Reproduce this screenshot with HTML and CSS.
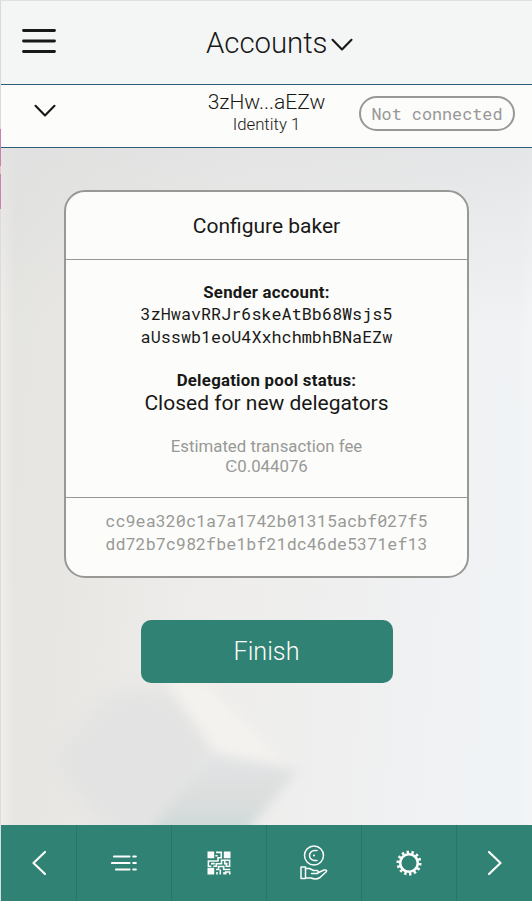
FILE: index.html
```html
<!DOCTYPE html>
<html lang="en">
<head>
<meta charset="utf-8">
<title>Accounts</title>
<link rel="stylesheet" href="styles.css">
</head>
<body>
<div class="window">
  <aside class="gutter"></aside>
  <div class="app">
    <header class="topbar">
      <svg class="menu" width="34" height="26" viewBox="0 0 34 26"><path d="M1.500 2.500h31M1.500 13h31M1.500 23.500h31"/></svg>
      <h1 class="title">Accounts</h1>
      <svg class="chevron" width="22" height="14" viewBox="0 0 22 14"><path d="M1.500 1.800l9.500 9.700 9.500-9.700"/></svg>
    </header>
    <section class="account">
      <svg class="chevron" width="22" height="14" viewBox="0 0 22 14"><path d="M1.500 1.800l9.500 9.700 9.500-9.700"/></svg>
      <div class="account-name">
        <div class="address">3zHw...aEZw</div>
        <div class="identity">Identity 1</div>
      </div>
      <div class="status">Not connected</div>
    </section>
    <main class="content">
      <svg class="backdrop" width="531" height="677" viewBox="0 0 531 677" preserveAspectRatio="none">
        <defs>
          <filter id="soft" x="-30%" y="-30%" width="160%" height="160%"><feGaussianBlur stdDeviation="11"/></filter>
          <filter id="fine" x="-30%" y="-30%" width="160%" height="160%"><feGaussianBlur stdDeviation="6"/></filter>
          <linearGradient id="face" x1="0" y1="0" x2="0" y2="1"><stop offset="0" stop-color="#e2e4e5"/><stop offset=".6" stop-color="#dbdddd"/><stop offset="1" stop-color="#c6d8d6"/></linearGradient>
        </defs>
        <path filter="url(#soft)" fill="#e2e3e2" d="M48 610L110 545 165 540 215 595 180 690H110z"/>
        <path filter="url(#fine)" fill="#f4f2ee" d="M165 530L205 535 290 622 215 604z"/>
        <path filter="url(#fine)" fill="url(#face)" d="M208 606L298 622 240 690H146z"/>
      </svg>
      <article class="card">
        <h2 class="card-title">Configure baker</h2>
        <div class="details">
          <div class="label">Sender account:</div>
          <div class="mono sender">3zHwavRRJr6skeAtBb68Wsjs5<br>aUsswb1eoU4XxhchmbhBNaEZw</div>
          <div class="label second">Delegation pool status:</div>
          <div class="value">Closed for new delegators</div>
          <div class="fee">Estimated transaction fee<br>Ͼ0.044076</div>
        </div>
        <div class="hash mono">cc9ea320c1a7a1742b01315acbf027f5<br>dd72b7c982fbe1bf21dc46de5371ef13</div>
      </article>
      <button class="finish">Finish</button>
    </main>
    <nav class="tabs">
      <a class="tab"><svg width="16" height="26" viewBox="0 0 16 26"><path d="M14 2L2.500 13 14 24"/></svg></a>
      <a class="tab"><svg width="26" height="18" viewBox="0 0 26 18"><path d="M3 2.500h15.500M22.300 2.500h2.500M1 9h17.500M22.300 9h2.500M5 15.500h13.500M22.300 15.500h2.500"/></svg></a>
      <a class="tab"><svg class="solid" width="24" height="24" viewBox="0 0 24 24"><path d="M.5.500h6.700v6.700H.5zM16.800.500h6.700v6.700h-6.700zM.5 16.800h6.700v6.700H.5z"/><path class="maze" d="M8.300 4.800h2.400M9 1.400h5.300v5.300h-3.300v3.300H1.400v5.200h3M4 12.600h3.800M9.300 12v3.300h-3M9.300 12.700h5.200V9.300h3.200v3.300h2.800M14.500 9.300h8.100v5.900h-3.300v-2.600M9 18.500h2.500v-3h5.200v3h6.500M10 21v2.500M13.300 23.500v-5M17 23.500v-2.400M18.700 23.500v-2.500h4v2.500"/></svg></a>
      <a class="tab"><svg class="thin" width="28" height="36" viewBox="0 0 28 36"><circle cx="14" cy="10.500" r="9.500"/><path d="M17 5.500h-2.500a5 5 0 0 0 0 10H17"/><circle class="dot" cx="14" cy="10.500" r="1"/><path d="M1 22h4.500v11.500H1zM5.500 23.500h4l4 2h3.500q2.500 1 .5 3h-6M17.500 28l6.500-3q3-.3 2.500 1.500l-6.500 6q-4 2.500-9 .5H5.500"/></svg></a>
      <a class="tab"><svg width="26" height="26" viewBox="0 0 26 26"><circle class="ring" cx="13" cy="13" r="8.800"/><circle class="teeth" cx="13" cy="13" r="10.900" pathLength="28"/></svg></a>
      <a class="tab"><svg width="16" height="26" viewBox="0 0 16 26"><path d="M2 2l11.500 11L2 24"/></svg></a>
    </nav>
  </div>
</div>
</body>
</html>
```
FILE: styles.css
```css
* { box-sizing: border-box; }
body { margin: 0; font-family: Roboto, "Liberation Sans", sans-serif; color: #181817; }
h1, h2 { margin: 0; }
svg { display: block; fill: none; stroke: currentColor; stroke-linecap: round; stroke-linejoin: round; }
.window { display: flex; height: 901px; border-top: 1px solid #dfe1e1; overflow: hidden; }
.gutter { width: 1px; background: linear-gradient(#d9dadb 0 128px, #ce80ac 128px 165px, #e4c5ce 165px 173px, #ce80ac 173px 208px, #dcdce0 208px); }
.app { width: 531px; display: flex; flex-direction: column; }
.topbar { height: 84px; display: grid; grid-template-columns: 205px auto 22px 1fr; align-items: center; background: #f4f6f5; border-bottom: 1px solid #2f5d78; }
.menu { margin: -3px 0 0 20.500px; stroke-width: 2.800; }
.title { font-size: 29.400px; font-weight: 300; line-height: 36px; width: 125px; white-space: nowrap; letter-spacing: -.05px; }
.chevron { stroke-width: 2.100; }
.topbar .chevron { margin-top: 4px; }
.account { height: 63px; display: grid; grid-template-columns: 173px 185px 156px; background: #fcfcfa; border-bottom: 1px solid #2f5d78; }
.account .chevron { margin: 19px 0 0 33px; }
.account-name { text-align: center; font-weight: 300; padding-top: 5px; }
.address { font-size: 21px; line-height: 24px; }
.identity { font-size: 16.800px; line-height: 20px; }
.status { margin-top: 11px; height: 35px; border: 2px solid #989898; border-radius: 18px; color: #989898; text-align: center; font: 16.800px/31px "Roboto Mono", "Liberation Mono", monospace; }
.content { position: relative; flex: 1; display: flex; flex-direction: column; align-items: center; padding-top: 42px; background: linear-gradient(90deg, #f0edea, rgba(240,237,234,0) 14px 516px, rgba(244,245,247,.9)), linear-gradient(95deg, #e4e4e0 3%, #e9e7e4 18%, #eeedeb 42%, #efefef 65%, #f0f2f4 85%, #eff3f5); }
.content::before { content: ""; position: absolute; inset: 0; background: linear-gradient(rgba(222,223,224,.65), rgba(226,227,228,0) 180px); }
.backdrop { position: absolute; inset: 0; stroke: none; }
.card { position: relative; width: 405px; height: 388px; border: 2px solid #989996; border-radius: 21px; background: #fcfcfa; text-align: center; overflow: hidden; }
.card-title { height: 68px; border-bottom: 1px solid #989996; font-size: 21px; font-weight: 400; line-height: 69px; }
.details { height: 238px; padding-top: 22px; border-bottom: 1px solid #989996; }
.label { font-size: 16.800px; line-height: 21px; font-weight: 700; letter-spacing: .25px; }
.mono { font: 16.800px/23px "Roboto Mono", "Liberation Mono", monospace; }
.sender { margin-top: -1px; }
.second { margin-top: 22px; }
.value { font-size: 21px; line-height: 25px; }
.fee { margin-top: 20px; font-size: 16.800px; line-height: 20px; color: #989996; }
.hash { padding-top: 11px; color: #989996; }
.finish { position: relative; margin-top: 42px; width: 252px; height: 63px; border: 0; border-radius: 10px; background: #308274; color: #fcfcfa; font: 300 25.200px Roboto, sans-serif; }
.tabs { height: 76px; display: grid; grid-template-columns: 76px repeat(4, 95px) 75px; background: #308274; color: #fcfcfa; }
.tab { display: grid; place-items: center; border-right: 1px solid #2a7468; }
.tab:last-child { border: 0; }
.tab svg { stroke-width: 2.200; }
.tab .solid { fill: currentColor; stroke: none; }
.solid .maze { fill: none; stroke: currentColor; stroke-width: 1.600; stroke-linecap: butt; stroke-linejoin: miter; }
.tab .thin { stroke-width: 1.500; }
.dot { fill: currentColor; stroke: none; }
.ring { stroke-width: 2.600; }
.teeth { stroke-width: 3.200; stroke-linecap: butt; stroke-dasharray: 1 1; }
```
